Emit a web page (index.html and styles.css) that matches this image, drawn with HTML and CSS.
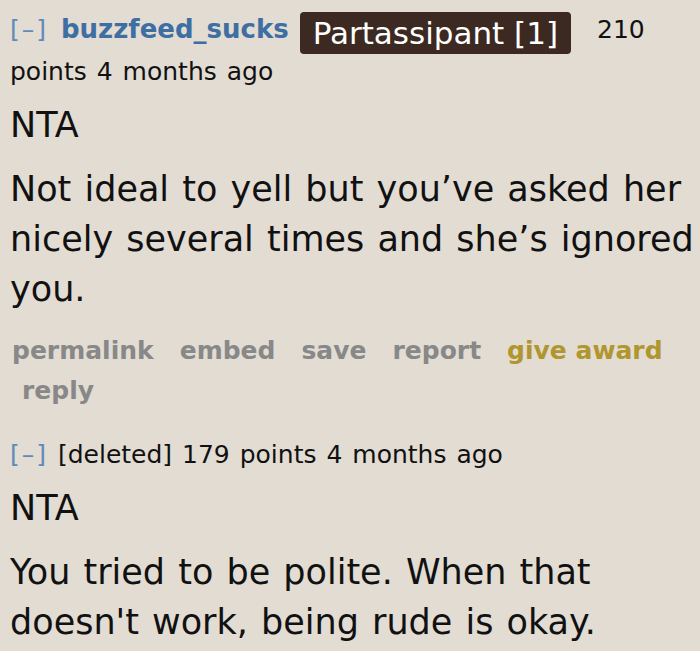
FILE: index.html
```html
<!DOCTYPE html>
<html>
<head>
<meta charset="utf-8">
<link rel="stylesheet" href="styles.css">
</head>
<body>
<div class="comment">
  <div class="tagline">
    <span class="expand">[–]</span>
    <span class="author">buzzfeed_sucks</span>
    <span class="flair">Partassipant [1]</span>
    <span class="score">210</span> <span class="unit">points</span> <span class="time">4 months ago</span>
  </div>
  <div class="md">
    <p class="short">NTA</p>
    <p>Not ideal to yell but you’ve asked her nicely several times and she’s ignored you.</p>
  </div>
  <ul class="buttons">
    <li>permalink</li>
    <li>embed</li>
    <li>save</li>
    <li>report</li>
    <li class="award">give award</li>
    <li class="reply">reply</li>
  </ul>
</div>
<div class="comment second">
  <div class="tagline">
    <span class="expand">[–]</span> [deleted] 179 points 4 months ago
  </div>
  <div class="md">
    <p class="short">NTA</p>
    <p>You tried to be polite. When that doesn't work, being rude is okay.</p>
  </div>
</div>
</body>
</html>
```

FILE: styles.css
```css
html, body {
  margin: 0;
  padding: 0;
  background: #e2dcd3;
}
body {
  font-family: "DejaVu Sans", Verdana, sans-serif;
  color: #111;
  padding: 0 4px 0 10px;
  width: 700px;
  box-sizing: border-box;
}
.comment {
  padding-top: 8px;
}
.tagline {
  font-size: 25px;
  line-height: 42px;
  word-spacing: 2px;
  color: #111;
}
.expand {
  color: #6189ba;
  letter-spacing: 2px;
}
.author {
  color: #3f6ea3;
  font-weight: bold;
  font-size: 26px;
  word-spacing: 0;
  padding-left: 3px;
}
.flair {
  display: inline-block;
  background: #3c2a22;
  color: #fff;
  font-size: 31px;
  line-height: 42px;
  word-spacing: 0;
  padding: 0 13px;
  border-radius: 4px;
  margin: -6px 16px -10px 1px;
  vertical-align: -6px;
}
.md p {
  margin: 0;
  font-size: 35px;
  line-height: 50px;
  word-spacing: 2px;
}
.md .short {
  margin: 7px 0 14px;
}
.buttons {
  list-style: none;
  margin: 17px 0 0;
  padding: 0;
  display: flex;
  flex-wrap: wrap;
  column-gap: 26px;
  font-size: 25px;
  font-weight: bold;
  line-height: 40px;
  color: #888;
}
.buttons li:first-child {
  margin-left: 2px;
}
.buttons .award {
  color: #b0962e;
}
.buttons .reply {
  margin-left: 12px;
}
.second {
  padding-top: 23px;
}
```
